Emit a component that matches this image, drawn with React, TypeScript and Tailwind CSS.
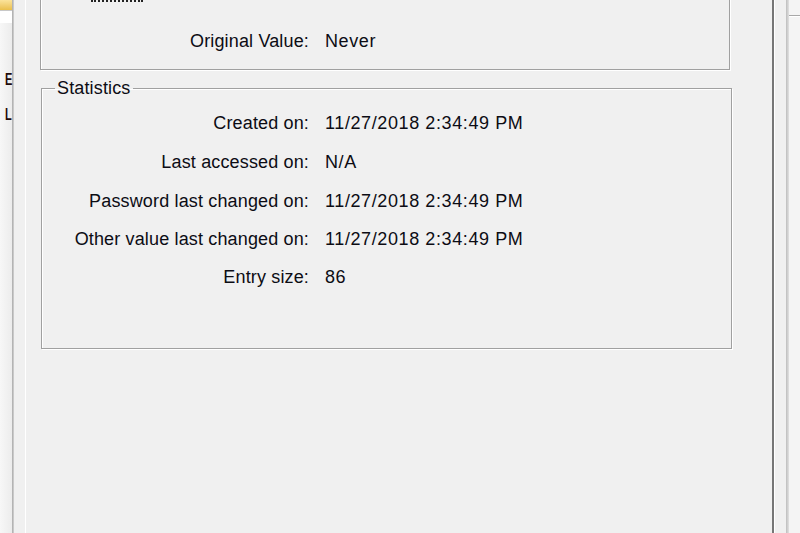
const font = { fontFamily: '"Liberation Sans", Arial, sans-serif' };

const stats = [
  { label: "Created on:", value: "11/27/2018 2:34:49 PM", row: "h-[39px]" },
  { label: "Last accessed on:", value: "N/A", row: "h-[39px]" },
  { label: "Password last changed on:", value: "11/27/2018 2:34:49 PM", row: "h-[39px]" },
  { label: "Other value last changed on:", value: "11/27/2018 2:34:49 PM", row: "h-[37px]" },
  { label: "Entry size:", value: "86", row: "h-[39px]" },
];

function Row({ label, value, row, labelWidth }: { label: string; value: string; row: string; labelWidth: string }) {
  return (
    <div className={`flex items-center ${row}`}>
      <span className={`${labelWidth} text-right tracking-[0.15px]`}>{label}</span>
      <span className="pl-[16px] tracking-[0.6px]">{value}</span>
    </div>
  );
}

export default function App() {
  return (
    <div
      className="w-[800px] h-[533px] overflow-hidden flex bg-[#f0f0f0] text-[18px] leading-[20px] text-[#0c0c14]"
      style={font}
    >
      {/* window behind, left edge */}
      <div className="w-[12px] h-full flex flex-col bg-gradient-to-r from-[#f7f7f7] to-[#ececec]">
        <div className="h-[11px] shrink-0 bg-gradient-to-b from-[#fbe39a] to-[#eabf4a] border-b border-[#c8c8c8]" />
        <div className="h-[12px] shrink-0 bg-white" />
        <div className="mt-[47px] pl-[5px] text-[17px] leading-[20px] font-semibold text-[#1e0a0a]">
          <span className="inline-block origin-left scale-x-[0.65]">E</span>
        </div>
        <div className="mt-[15px] pl-[5px] text-[17px] leading-[20px] font-semibold text-[#1e0a0a]">
          <span className="inline-block origin-left scale-x-[0.65]">L</span>
        </div>
      </div>
      <div className="w-[2px] h-full bg-gradient-to-r from-[#a9a9a9] to-[#d4d4d4]" />

      {/* dialog frame */}
      <div className="w-[12px] h-full bg-[#f0f0f0] border-r border-white" />

      {/* dialog content */}
      <div className="w-[746px] h-full bg-[#f0f0f0] pl-[14px]">
        <div className="w-[690px] h-[80px] -mt-[10px] border border-[#a0a0a0] shadow-[inset_1px_1px_0_#fff,1px_1px_0_#fff] flex flex-col">
          <div className="ml-[50px] mt-[9px] w-[52px] h-0 border-b-2 border-dotted border-[#222]" />
          <div className="mt-[29px]">
            <Row label="Original Value:" value="Never" row="h-[20px]" labelWidth="w-[268px]" />
          </div>
        </div>

        <fieldset className="ml-[1px] mt-[8px] w-[691px] h-[271px] border border-[#a0a0a0] shadow-[inset_1px_1px_0_#fff,1px_1px_0_#fff] p-0">
          <legend className="ml-[13px] px-[2px] leading-[20px] tracking-[0.15px]">Statistics</legend>
          <div className="pt-[5px]">
            {stats.map((s) => (
              <Row key={s.label} label={s.label} value={s.value} row={s.row} labelWidth="w-[267px]" />
            ))}
          </div>
        </fieldset>
      </div>

      {/* dialog right edge */}
      <div className="w-[3px] h-full border-l-2 border-[#767676] bg-white" />
      <div className="w-[11px] h-full bg-[#f0f0f0]" />
      <div className="w-[3px] h-full bg-gradient-to-r from-[#bdbdbd] to-[#e2e2e2]" />
      <div className="flex-1 h-full bg-[#f4f4f4] flex flex-col">
        <div className="mt-[15px] h-[2px] border-t border-[#a8a8a8] bg-white" />
      </div>
    </div>
  );
}
